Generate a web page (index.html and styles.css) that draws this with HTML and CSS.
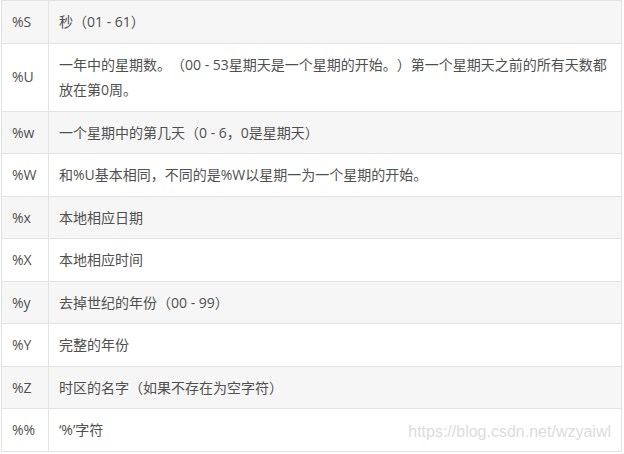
FILE: index.html
```
<!DOCTYPE html>
<html lang="zh-CN">
<head>
    <meta charset="UTF-8">
    <meta name="viewport" content="width=device-width, initial-scale=1.0">
    <title>时间格式化符号</title>
    <link rel="stylesheet" href="styles.css">
</head>
<body>
    <div class="wrap">
        <table class="fmt-table">
            <tbody>
                <tr><td class="code">%S</td><td>秒（01 - 61）</td></tr>
                <tr><td class="code">%U</td><td>一年中的星期数。（00 - 53星期天是一个星期的开始。）第一个星期天之前的所有天数都放在第0周。</td></tr>
                <tr><td class="code">%w</td><td>一个星期中的第几天（0 - 6，0是星期天）</td></tr>
                <tr><td class="code">%W</td><td>和%U基本相同，不同的是%W以星期一为一个星期的开始。</td></tr>
                <tr><td class="code">%x</td><td>本地相应日期</td></tr>
                <tr><td class="code">%X</td><td>本地相应时间</td></tr>
                <tr><td class="code">%y</td><td>去掉世纪的年份（00 - 99）</td></tr>
                <tr><td class="code">%Y</td><td>完整的年份</td></tr>
                <tr><td class="code">%Z</td><td>时区的名字（如果不存在为空字符）</td></tr>
                <tr><td class="code">%%</td><td>‘%’字符</td></tr>
            </tbody>
        </table>
        <span class="watermark">https://blog.csdn.net/wzyaiwl</span>
    </div>
</body>
</html>
```

FILE: styles.css
```
body {
    margin: 0;
    padding: 0;
    background: #fff;
    font-family: "Open Sans", "Noto Sans CJK SC", sans-serif;
    color: #4f4f4f;
}
.wrap {
    position: relative;
    padding-left: 1px;
    width: 621px;
}
.fmt-table {
    width: 621px;
    border-collapse: collapse;
    font-size: 14px;
    line-height: 25.5px;
    text-spacing-trim: space-all;
}
.fmt-table td {
    border: 1px solid #e3e3e3;
    padding: 8px 8px 8px 10px;
    vertical-align: middle;
}
.fmt-table td.code {
    width: 28px;
}
.fmt-table tr:nth-child(odd) td {
    background-color: #f6f6f6;
}
.watermark {
    position: absolute;
    right: 11px;
    bottom: 11px;
    font-family: "Liberation Sans", Arial, sans-serif;
    font-size: 16px;
    color: #dcdcdc;
}
```
